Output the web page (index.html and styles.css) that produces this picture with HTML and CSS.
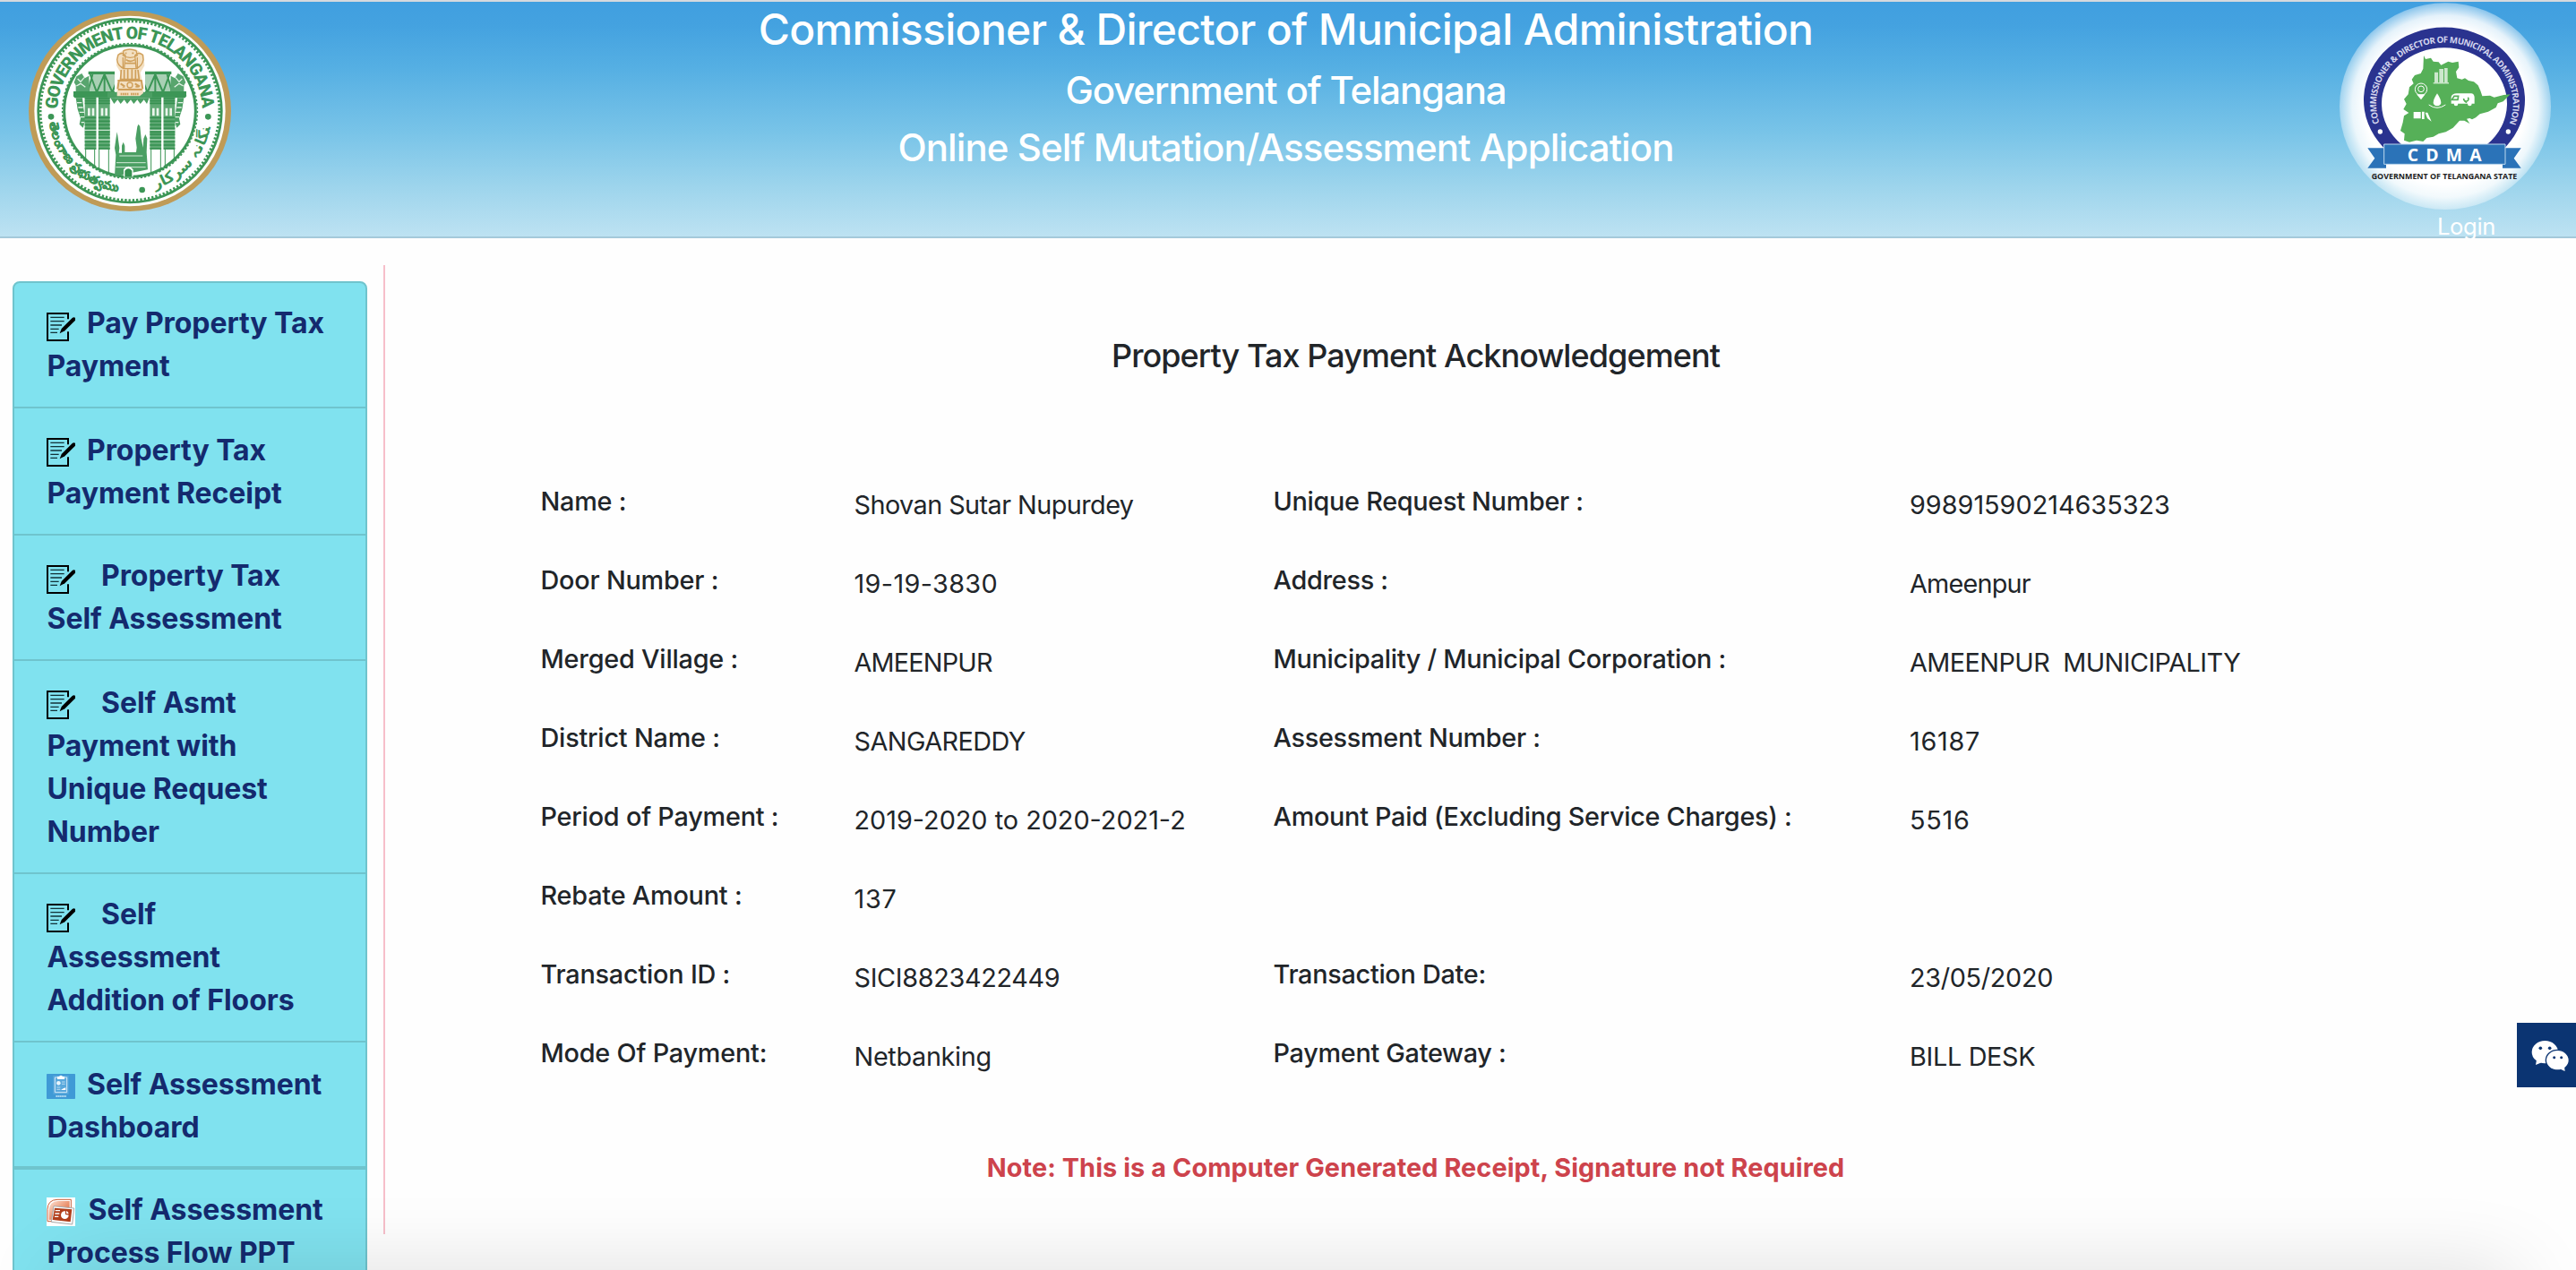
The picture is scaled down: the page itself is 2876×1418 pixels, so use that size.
FILE: index.html
```html
<!DOCTYPE html>
<html lang="en">
<head>
<meta charset="utf-8">
<title>Property Tax Payment Acknowledgement</title>
<link rel="stylesheet" href="styles.css">
</head>
<body>
<svg class="defs" width="0" height="0">
  <symbol id="form" viewBox="0 0 96 96">
    <path d="M72 22V3H3v90h69V64" fill="none" stroke="#000" stroke-width="6"/>
    <path d="M13 16h46M13 29h46M13 42h38M13 55h28M13 67h23" stroke="#123238" stroke-width="4"/>
    <path d="M44 70l6-16 36-36q6-4 10 0v8L61 61z" fill="#000"/>
  </symbol>
  <symbol id="pillar" viewBox="0 0 140 360">
    <path d="M52 5h118v10H52z" fill="#3c9656"/>
    <path d="M50 75l16-60h92l10 60z" fill="#a9d0b4"/>
    <path d="M58 15l22 60 26-60 26 60 24-60M66 15l-16 60h110l-18-60M106 12v60" fill="none" stroke="#3c9656" stroke-width="6"/>
    <path d="M10 75V52l-6-10 8-20 18-10 10 16 14-8 2 55z" fill="#58a56e"/>
    <path d="M2 72h180v14H2zM0 86h182l-8 8H6z" fill="#3c9656"/>
    <path d="M10 94h22l4 36 6 38-8 26-12-12 4-20-10-30z" fill="#4b9f63"/>
    <path d="M16 30l10 10 12-14M12 54l14-8 16 12M14 110h16M18 126h16M22 142h16M26 158h14M28 176h10" fill="none" stroke="#e3f1e6" stroke-width="4"/>
    <path d="M40 92h40v174H40zM84 92h40v174H84z" fill="#5fa974"/>
    <path d="M40 96h84M40 104h84M40 112h84M40 160h84M40 172h84M40 184h84M40 196h84M40 208h84M40 216h84M40 228h84M40 240h84M40 252h84M40 264h84" stroke="#35904f" stroke-width="5"/>
    <path d="M40 202h84M40 234h84" stroke="#d9ecdd" stroke-width="3"/>
    <path d="M50 128h8v26h-8zM64 128h8v26h-8zM94 128h8v26h-8zM108 128h8v26h-8z" fill="#eaf5ec"/>
    <path d="M82 92v234" stroke="#fff" stroke-width="7"/>
    <path d="M43 264v46M73 264v66M88 264v74M120 264v84" stroke="#3c9656" stroke-width="3"/>
  </symbol>
</svg>

<header class="banner">
  <div class="banner-side">
    <svg class="seal" viewBox="96 36 678 672">
      <ellipse cx="435" cy="372" rx="339" ry="336" fill="#bf9b57"/>
      <ellipse cx="435" cy="372" rx="320" ry="319" fill="#fff"/>
      <circle cx="435" cy="371" r="307" fill="none" stroke="#3c9656" stroke-width="8"/>
      <circle cx="435" cy="371" r="300" fill="none" stroke="#3c9656" stroke-width="9" stroke-dasharray="7 6"/>
      <circle cx="435" cy="372" r="220" fill="none" stroke="#3c9656" stroke-width="9"/>
      <circle cx="435" cy="372" r="226" fill="none" stroke="#3c9656" stroke-width="5" stroke-dasharray="7 6"/>
      <path id="arcTop" d="M193 372A242 242 0 0 1 677 372" fill="none"/>
      <path id="arcTelugu" d="M165 412A273 273 0 0 0 446 644" fill="none"/>
      <path id="arcUrdu" d="M519 633A275 275 0 0 0 703 435" fill="none"/>
      <text class="seal-en"><textPath href="#arcTop" startOffset="6" textLength="746">GOVERNMENT OF TELANGANA</textPath></text>
      <text class="seal-te"><textPath href="#arcTelugu">తెలంగాణ ప్రభుత్వము</textPath></text>
      <text class="seal-ur"><textPath href="#arcUrdu">تلنگانہ سرکار</textPath></text>
      <g fill="#3c9656"><circle cx="171" cy="391" r="10"/><circle cx="697" cy="391" r="10"/><circle cx="476" cy="636" r="10"/></g>
      <use href="#pillar" x="244" y="234" width="140" height="360" overflow="visible"/>
      <use href="#pillar" x="244" y="234" width="140" height="360" overflow="visible" transform="matrix(-1 0 0 1 870 0)"/>
      <path d="M360 308h150v20H360z" fill="#4b9f63"/>
      <path d="M370 328h130l-8 20-10-14-12 14-10-14-12 14-10-14-12 14-10-14-12 14-10-14-12 14z" fill="#4b9f63"/>
      <path d="M384 590l4-72-4-22 5-36 3-18 3 18 5 36-2 16h10v-24l5-12 5 12v22h38l2-16-4-30 6-40 4-8 5 8 4 40 6 30 2-30 6-14 6 14-2 46 4 58z" fill="#4b9f63"/>
      <path d="M400 522h78M390 545h98M388 560h100" stroke="#d2e8d7" stroke-width="3"/>
      <path d="M414 592v-24q16-22 32 0v24z" fill="#fff"/>
      <path d="M418 592v-20q12-14 24 0v20z" fill="#35904f"/>
      <path d="M392 322v-42l8-14 4-22-14-24 2-36 24-18h40l26 18 2 36-14 24 6 28 4 40-12 10z" fill="#f3e0c2"/>
      <g fill="none" stroke="#cf9f5a" stroke-width="4">
        <path d="M414 170q20-10 42 0l4 16q-24 14-48 0zM396 184q14-12 24 2l-4 44q-22-8-24-30zM478 184q-14-12-26 2l4 44q20-8 24-30zM412 192v38h48v-38"/>
        <path d="M422 200q14 10 30 0M420 178h4m18 0h6M418 212h36M406 234l-2 32h62l-4-32M416 234v30m12-32v32m14-32v32m12-30v30" stroke-width="5"/>
        <path d="M394 270h82M396 300h80M398 272l-4 26m80-26l4 26" stroke-width="6"/>
        <circle cx="435" cy="285" r="9"/><path d="M404 280l14 10m34-10l16 10M410 290h8m36 0h10" stroke-width="6"/>
        <path d="M404 315h26m8 0h28" stroke-width="8" stroke-dasharray="5 2"/>
      </g>
    </svg>
  </div>
  <div class="banner-titles">
    <h1>Commissioner &amp; Director of Municipal Administration</h1>
    <h2 class="gov">Government of Telangana</h2>
    <h2 class="app">Online Self Mutation/Assessment Application</h2>
  </div>
  <div class="banner-right">
    <svg class="cdma" viewBox="156 9 708 693">
      <defs>
        <radialGradient id="glow"><stop offset=".76" stop-color="#fff"/><stop offset=".88" stop-color="#fff" stop-opacity=".86"/><stop offset="1" stop-color="#fff" stop-opacity=".38"/></radialGradient>
      </defs>
      <ellipse cx="510" cy="356" rx="354" ry="346" fill="url(#glow)"/>
      <path d="M303 494A270 243 0 1 1 711 494L650 484A210 187 0 1 0 364 484z" fill="#2a338f"/>
      <path id="arcCdma" d="M290 412A229 206 0 1 1 726 412" fill="none"/>
      <text class="cdma-arc"><textPath href="#arcCdma" textLength="815">COMMISSIONER &amp; DIRECTOR OF MUNICIPAL ADMINISTRATION</textPath></text>
      <g fill="#fff"><circle cx="292" cy="441" r="8"/><circle cx="721" cy="441" r="8"/></g>
      <path fill="#56b058" d="M438 186l6 12 18-4 8 12 18 2 8 10 24-12 14 4 20-4 2 20-10 14 4 22 16 4 10-4 12 8 18 4 14 12 8 18 6 18 26-2 14 6 32-8 22-2-24 24-18 6-6 14-26 14-28 8-14 12-12 6-8-4-10 2 10 16-18-10-16 0-22 24-24 14-24 6-18 10-22 4-12 12-22-4-24 6-18-6 2-22-14-10 8-28 4-22 16-10-18-12 10-18-8-16 14-16 4-24 14-12-6-14 10-14 20-6 8-16z"/>
      <g fill="#fff">
        <path d="M474 242h12v34h-12zM490 231h14v45h-14zM507 228h11v48h-11z" opacity=".7"/><path d="M470 277h52v3h-52z"/>
        <path d="M483 313q-26 40 0 42 26-2 0-42z"/>
        <path d="M530 324q4-11 18-11h50q10 2 10 14v20h-78z"/><circle cx="546" cy="348" r="7"/><circle cx="592" cy="348" r="7"/>
        <path d="M414 316l15 18 14-18zM404 375h24v22h-24zM432 374h8v25h-8zM443 377h8l13 30-14-11z"/>
      </g>
      <path d="M540 322h14l-2 12h-20zM572 330a8 8 0 1 0 14-4M574 338l8 6" fill="none" stroke="#56b058" stroke-width="5"/>
      <g fill="none" stroke="#fff" stroke-width="3"><circle cx="429" cy="299" r="20"/><circle cx="429" cy="298" r="10"/><path d="M455 351q28 20 56 0"/></g>
      <path d="M250 496h62v67h-62l24-33zM764 496h-62v67h62l-24-33z" fill="#2b73b8"/>
      <path d="M305 483h406v67H305z" fill="#2b73b8" stroke="#bcd8ee" stroke-width="3"/>
      <text class="cdma-name" x="383" y="539" textLength="249">CDMA</text>
      <text class="cdma-state" x="263" y="599" textLength="488" lengthAdjust="spacingAndGlyphs">GOVERNMENT OF TELANGANA STATE</text>
    </svg>
    <a class="login">Login</a>
  </div>
</header>

<div class="page">
  <nav class="menu">
    <a class="item"><svg class="icon"><use href="#form"/></svg>Pay Property Tax<br>Payment</a>
    <a class="item"><svg class="icon"><use href="#form"/></svg>Property Tax<br>Payment Receipt</a>
    <a class="item"><svg class="icon wide"><use href="#form"/></svg>Property Tax<br>Self Assessment</a>
    <a class="item"><svg class="icon wide"><use href="#form"/></svg>Self Asmt<br>Payment with<br>Unique Request<br>Number</a>
    <a class="item"><svg class="icon wide"><use href="#form"/></svg>Self<br>Assessment<br>Addition of Floors</a>
    <a class="item thick"><svg class="icon report" viewBox="0 0 96 84"><rect width="96" height="84" rx="2" fill="#3f9ad6"/><path d="M22 6h52v62H22z" fill="#6bb2e0" opacity=".6"/><path d="M28 12h40v50H28z" fill="none" stroke="#d5ebf8" stroke-width="3"/><path d="M36 9h6q6-8 12 0h6v9H36z" fill="#fff"/><circle cx="40" cy="31" r="7" fill="#e8f5fc"/><path d="M51 27h11M51 34h11M34 45h12M34 52h12" stroke="#b5dbf1" stroke-width="3"/><path d="M48 54l8-5 8-3v8z" fill="#fff"/><path d="M31 75h35" stroke="#a9d5ef" stroke-width="6" stroke-dasharray="5 1"/></svg>Self Assessment<br>Dashboard</a>
    <a class="item"><svg class="icon ppt" viewBox="0 0 96 96"><defs><linearGradient id="pptBg" x2="1" y2="1"><stop offset="0" stop-color="#fde3d5"/><stop offset=".6" stop-color="#e98a64"/><stop offset="1" stop-color="#c8512b"/></linearGradient></defs><path d="M0 0h96v96H0z" fill="#fff"/><path d="M3 80V40Q4 8 36 7h46v73z" fill="#fff" stroke="#c9623d" stroke-width="3"/><path d="M8 75V42Q10 14 38 12h39v63z" fill="url(#pptBg)"/><path d="M24 29l68 7-6 54-70-8z" fill="#fff" stroke="#aaa" stroke-width="3"/><path d="M27 35l58 5-5 42-60-7z" fill="#b2401c"/><path d="M29 44h16M28 54h15M27 64h13" stroke="#fff" stroke-width="4"/><circle cx="61" cy="59" r="13" fill="#fff"/><path d="M63 57V44q13 2 13 15z" fill="#b2401c"/><path d="M66 54v-9q8 2 8 10z" fill="#fff"/></svg>Self Assessment<br>Process Flow PPT</a>
  </nav>
  <main class="receipt">
    <h3>Property Tax Payment Acknowledgement</h3>
    <dl class="fields">
      <dt>Name :</dt><dd class="tight">Shovan Sutar Nupurdey</dd>
      <dt class="right">Unique Request Number :</dt><dd>99891590214635323</dd>
      <dt>Door Number :</dt><dd class="loose">19-19-3830</dd>
      <dt class="right">Address :</dt><dd class="tighter">Ameenpur</dd>
      <dt>Merged Village :</dt><dd class="tighter">AMEENPUR</dd>
      <dt class="right">Municipality / Municipal Corporation :</dt><dd class="tight">AMEENPUR&nbsp; MUNICIPALITY</dd>
      <dt>District Name :</dt><dd class="tight">SANGAREDDY</dd>
      <dt class="right">Assessment Number :</dt><dd class="looser">16187</dd>
      <dt>Period of Payment :</dt><dd>2019-2020 to 2020-2021-2</dd>
      <dt class="right">Amount Paid (Excluding Service Charges) :</dt><dd class="looser">5516</dd>
      <dt>Rebate Amount :</dt><dd class="looser">137</dd>
      <dt></dt><dd></dd>
      <dt>Transaction ID :</dt><dd class="snug">SICI8823422449</dd>
      <dt class="right">Transaction Date:</dt><dd class="snug">23/05/2020</dd>
      <dt>Mode Of Payment:</dt><dd class="snug">Netbanking</dd>
      <dt class="right">Payment Gateway :</dt><dd class="snug">BILL DESK</dd>
    </dl>
    <p class="note">Note: This is a Computer Generated Receipt, Signature not Required</p>
  </main>
</div>
<div class="edge-shadow"></div>
<a class="chat"><svg viewBox="330 126 198 216">
  <ellipse cx="424" cy="224" rx="44" ry="38" fill="#fff"/><path d="M396 250l-3 17 20-8z" fill="#fff"/>
  <ellipse cx="466" cy="251" rx="39" ry="34" fill="#fff" stroke="#0b3472" stroke-width="4"/><path d="M476 281l15 7-2-15z" fill="#fff"/>
  <g fill="#0b3472"><circle cx="409" cy="211" r="5.5"/><circle cx="440" cy="211" r="5.5"/><circle cx="455" cy="242" r="4.5"/><circle cx="479" cy="242" r="4.5"/></g>
</svg></a>
</body>
</html>
```
FILE: styles.css
```css
* { box-sizing: border-box; }
html, body { margin: 0; height: 1418px; overflow: hidden; }
body { position: relative; background: #fefefe; color: #212529; font: 28.8px/88px Inter, "Liberation Sans", sans-serif; white-space: nowrap; }
h1, h2, h3, p, dl, dd { margin: 0; }
.defs { position: absolute; }

.banner { display: flex; height: 266px; border-top: 2px solid #d6d9de; border-bottom: 2px solid #a4c9da; color: #fff; background: linear-gradient(#409fe0, #44a2e0 10%, #55afe3 28%, #79c4e8 56%, #9cd4ec 78%, #bde2f2); }
.banner-side { width: 320px; padding: 10px 0 0 32px; }
.seal { display: block; width: 226px; height: 224px; }
.seal-en { font: 900 58px Roboto, sans-serif; fill: #3c9656; }
.seal-te { font: 700 41px "Noto Sans", sans-serif; fill: #3c9656; stroke: #3c9656; stroke-width: 1.5px; }
.seal-ur { font: 700 50px "DejaVu Sans", sans-serif; fill: #3c9656; }
.banner-titles { flex: 1; padding-top: 1px; text-align: center; }
.banner h1 { font-size: 48px; font-weight: 550; line-height: 59px; letter-spacing: -.68px; }
.banner h2 { font-size: 42px; font-weight: 550; line-height: 64px; }
.banner .gov { margin-top: 7px; letter-spacing: -1.17px; }
.banner .app { letter-spacing: -.92px; }
.banner-right { width: 325px; padding: 1px 0 0 61px; }
.cdma { display: block; width: 236px; height: 231px; }
.cdma-arc { font: 700 29px "Open Sans", sans-serif; fill: #d4d6ee; }
.cdma-name { font: 700 58px "Open Sans", sans-serif; fill: #fff; }
.cdma-state { font: 700 24px "Open Sans", sans-serif; fill: #222; }
.login { display: block; margin: 1px 0 0 109px; font-size: 25.6px; line-height: 36px; letter-spacing: -.35px; }

.page { display: flex; align-items: flex-start; }
.menu { width: 396px; height: 1200px; margin: 48px 18px 0 14px; border: 2px solid #6fc4cd; border-radius: 8px; background: #80e2ef; color: #142a6e; font-size: 32px; font-weight: 700; line-height: 48px; }
.item { display: block; padding: 21px 0 21px 36.5px; border-bottom: 2px solid #6fc4cd; letter-spacing: -.07px; }
.item:nth-child(even) { padding-top: 23px; }
.item.thick { padding-bottom: 19px; border-bottom-width: 4px; }
.icon { width: 32px; height: 32px; margin: 0 13px 0 -.5px; vertical-align: -9px; }
.item:nth-child(even) .icon { vertical-align: -7px; }
.icon.wide { margin-right: 29px; }
.item .icon.report { height: 28px; vertical-align: -5px; }
.item .icon.ppt { margin-right: 14.5px; vertical-align: -7px; }

.receipt { width: 2303px; height: 1082px; margin-top: 30px; padding-top: 78.5px; border-left: 2px solid #f7bfca; text-align: center; }
.receipt h3 { font-size: 36px; font-weight: 530; line-height: 44px; letter-spacing: -.92px; }
.fields { display: grid; grid-template-columns: 350px 468px 710.5px 1fr; grid-auto-rows: 88px; margin: 97px 0 0 173.5px; text-align: left; }
.fields dt { font-weight: 500; letter-spacing: -.2px; }
.fields dt.right { letter-spacing: -.28px; }
.fields dd { margin: 4px 0 -4px; }
.fields .tighter { letter-spacing: -.8px; }
.fields .tight { letter-spacing: -.55px; }
.fields .snug { letter-spacing: -.32px; }
.fields .loose { letter-spacing: .37px; }
.fields .looser { letter-spacing: .75px; }
.note { margin-top: 62.5px; color: #cd434c; font-weight: 700; line-height: 44px; letter-spacing: .1px; }

.edge-shadow { position: absolute; left: 70px; right: 70px; top: 1425px; height: 60px; box-shadow: 0 0 90px rgba(0, 0, 0, .17); }
.chat { position: absolute; right: 0; top: 1142px; width: 66px; height: 72px; background: #0b3472; }
.chat svg { display: block; width: 66px; height: 72px; }
```
